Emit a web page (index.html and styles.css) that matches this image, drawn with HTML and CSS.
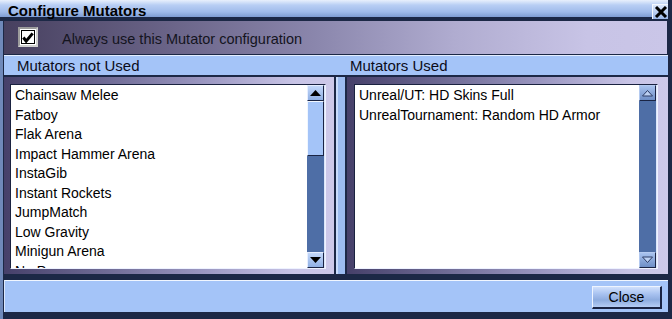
FILE: index.html
```html
<!DOCTYPE html>
<html lang="en">
<head>
    <meta charset="UTF-8">
    <title>Configure Mutators</title>
    <link rel="stylesheet" href="styles.css">
</head>
<body>

<div class="window">
    <div class="titlebar">
        <span class="title">Configure Mutators</span>
        <div class="close-x">
            <svg width="14" height="12" viewBox="0 0 14 12">
                <path d="M2 1 L12 11 M12 1 L2 11" stroke="#000" stroke-width="3"/>
            </svg>
        </div>
    </div>

    <div class="frame">
        <div class="checkrow">
            <div class="checkbox">
                <div class="checkbox-inner">
                    <svg width="13" height="13" viewBox="0 0 13 13">
                        <path d="M1.5 6.5 L4.5 10.5 L11.5 2" stroke="#000" stroke-width="3.2" fill="none"/>
                    </svg>
                </div>
            </div>
            <span class="checklabel">Always use this Mutator configuration</span>
        </div>

        <div class="headers">
            <div class="colhead">Mutators not Used</div>
            <div class="colhead">Mutators Used</div>
        </div>

        <div class="panels">
            <div class="panel panel-left">
                <div class="listbox">
                    <ul class="list">
                        <li>Chainsaw Melee</li>
                        <li>Fatboy</li>
                        <li>Flak Arena</li>
                        <li>Impact Hammer Arena</li>
                        <li>InstaGib</li>
                        <li>Instant Rockets</li>
                        <li>JumpMatch</li>
                        <li>Low Gravity</li>
                        <li>Minigun Arena</li>
                        <li>No Powerups</li>
                    </ul>
                    <div class="scrollbar">
                        <div class="sbtn">
                            <svg width="13" height="8" viewBox="0 0 13 8"><path d="M1 7 L6.5 1 L12 7 Z" fill="#000"/></svg>
                        </div>
                        <div class="thumb"></div>
                        <div class="track"></div>
                        <div class="sbtn">
                            <svg width="13" height="8" viewBox="0 0 13 8"><path d="M1 1 L6.5 7 L12 1 Z" fill="#000"/></svg>
                        </div>
                    </div>
                </div>
            </div>

            <div class="divider"></div>

            <div class="panel panel-right">
                <div class="listbox">
                    <ul class="list">
                        <li>Unreal/UT: HD Skins Full</li>
                        <li>UnrealTournament: Random HD Armor</li>
                    </ul>
                    <div class="scrollbar">
                        <div class="sbtn sbtn-off">
                            <svg width="13" height="8" viewBox="0 0 13 8"><path d="M1.5 7 L6.5 1.5 L11.5 7 Z" fill="#bcd0f2" stroke="#2c3c66" stroke-width="1"/></svg>
                        </div>
                        <div class="track"></div>
                        <div class="sbtn sbtn-off">
                            <svg width="13" height="8" viewBox="0 0 13 8"><path d="M1.5 1 L6.5 6.5 L11.5 1 Z" fill="#bcd0f2" stroke="#2c3c66" stroke-width="1"/></svg>
                        </div>
                    </div>
                </div>
            </div>
        </div>

        <div class="footer">
            <button class="btn">Close</button>
        </div>
    </div>
</div>

</body>
</html>
```

FILE: styles.css
```css
body {
    margin: 0;
    padding: 0;
    background-color: #1c2846;
    font-family: 'Liberation Sans', Arial, sans-serif;
    color: #000;
}

.window {
    width: 672px;
    height: 319px;
    background-color: #1c2846;
    display: flex;
    flex-direction: column;
    overflow: hidden;
}

.titlebar {
    height: 17px;
    flex: none;
    margin-right: 4px;
    display: flex;
    align-items: flex-start;
    justify-content: space-between;
    background: linear-gradient(to bottom, #e8f0fc 0, #b8cef4 30%, #a0bbea 70%, #7e9cd2 100%);
}

.title {
    font-weight: bold;
    font-size: 15px;
    line-height: 17px;
    padding-left: 8px;
    padding-top: 2px;
    color: #000;
}

.close-x {
    width: 16px;
    height: 15px;
    margin-top: 4px;
    display: flex;
    align-items: center;
    justify-content: center;
    background: linear-gradient(to bottom, #dce8fc, #9ab6e8);
    border-top: 1px solid #f4f8ff;
    border-left: 1px solid #f4f8ff;
    box-sizing: border-box;
    position: relative;
    z-index: 1;
}

.frame {
    flex: 1;
    min-height: 0;
    margin-top: 4px;
    border-left: 3px solid #6f89ba;
    padding-left: 1px;
    padding-right: 4px;
    display: flex;
    flex-direction: column;
}

.checkrow {
    height: 33px;
    flex: none;
    margin-right: 1px;
    display: flex;
    align-items: center;
    padding-left: 14px;
    background: linear-gradient(to right, #47405f 0, #6a6488 25%, #8c88ae 48%, #b0acd0 68%, #c8c4e6 88%, #cac6e8 100%);
}

.checkbox {
    width: 20px;
    height: 20px;
    box-sizing: border-box;
    border: 2px solid #9c9c9c;
    border-right-color: #d0d0d0;
    border-bottom-color: #d0d0d0;
    background-color: #fff;
    padding: 1px;
    margin-top: -1px;
}

.checkbox-inner {
    width: 14px;
    height: 14px;
    box-sizing: border-box;
    border: 1px solid #000;
    display: flex;
    align-items: center;
    justify-content: center;
}

.checklabel {
    font-size: 14.5px;
    margin-left: 24px;
    margin-top: 2px;
    color: #14141e;
}

.headers {
    margin-top: 1px;
    height: 20px;
    flex: none;
    box-sizing: border-box;
    border-top: 1px solid #e4eeff;
    background-color: #a4c4f8;
    display: grid;
    grid-template-columns: 333px 1fr;
    align-items: center;
}

.colhead {
    font-size: 15px;
    padding-left: 13px;
    color: #0c0c18;
}

.panels {
    margin-top: 2px;
    height: 197px;
    flex: none;
    display: grid;
    grid-template-columns: 330px 13px 321px;
    grid-template-rows: 197px;
}

.panel {
    background: linear-gradient(to right, #46406a 0, #6e6a94 30%, #9a96c0 60%, #c8c4e6 88%, #cdc9ea 100%);
    display: flex;
    box-sizing: border-box;
    min-height: 0;
    overflow: hidden;
}

.panel-left {
    padding: 7px 8px 5px 6px;
}

.panel-right {
    padding: 7px 10px 5px 7px;
}

.listbox {
    flex: 1;
    display: flex;
    min-height: 0;
    border-top: 1px solid #1a2240;
    border-left: 1px solid #1a2240;
    border-right: 1px solid #eef2ff;
    border-bottom: 1px solid #eef2ff;
    overflow: hidden;
}

.list {
    flex: 1;
    margin: 0;
    padding: 1px 0 0 4px;
    list-style: none;
    background-color: #fff;
    overflow: hidden;
    font-size: 14px;
    line-height: 19.5px;
    color: #000;
}

.list li {
    white-space: nowrap;
}

.scrollbar {
    width: 18px;
    display: flex;
    flex-direction: column;
    background-color: #4e6ea6;
    border-right: 1px solid #dce6fa;
    box-sizing: border-box;
}

.sbtn {
    height: 16px;
    flex: none;
    box-sizing: border-box;
    border-top: 1px solid #e6eeff;
    border-left: 1px solid #e6eeff;
    border-right: 1px solid #1a2444;
    border-bottom: 1px solid #1a2444;
    background: linear-gradient(to bottom, #c4d8fa, #90b0e4);
    display: flex;
    align-items: center;
    justify-content: center;
}

.sbtn-off {
    background: linear-gradient(to bottom, #a8c2ee, #6e8ec6);
    border-top-color: #b4caf0;
    border-left-color: #b4caf0;
}

.thumb {
    height: 55px;
    flex: none;
    box-sizing: border-box;
    background-color: #a4c4f8;
    border-top: 1px solid #f0f6ff;
    border-left: 1px solid #f0f6ff;
    border-right: 1px solid #1a2444;
    border-bottom: 1px solid #1a2444;
}

.track {
    flex: 1;
}

.divider {
    background-color: #9cbcf0;
    border-left: 2px solid #1c2846;
    border-right: 2px solid #1c2846;
    box-shadow: inset 2px 0 0 #c8dcfc;
}

.footer {
    margin-top: 6px;
    height: 32px;
    flex: none;
    box-sizing: border-box;
    background-color: #a4c4f8;
    border-top: 1px solid #f0f6ff;
    border-left: 1px solid #dce8fc;
    display: flex;
    align-items: center;
    justify-content: flex-end;
    padding-right: 6px;
}

.btn {
    width: 70px;
    height: 23px;
    font-family: 'Liberation Sans', Arial, sans-serif;
    font-size: 14px;
    color: #000;
    padding: 0;
    background: linear-gradient(to bottom, #d0e0fc 0, #a8c2f0 35%, #8eacdf 65%, #b4ccf4 100%);
    border-top: 1px solid #eef4ff;
    border-left: 1px solid #eef4ff;
    border-right: 2px solid #1a2444;
    border-bottom: 2px solid #1a2444;
    margin-top: 1px;
}
```
